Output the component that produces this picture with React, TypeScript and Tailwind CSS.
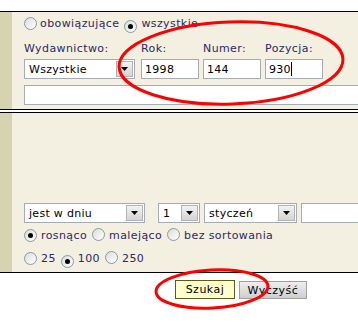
import React from "react";

const Radio = ({ checked }: { checked?: boolean }) => (
  <span className="relative inline-flex items-center justify-center w-[13px] h-[13px] rounded-full border border-[#8a97a8] bg-[linear-gradient(135deg,#dcdcd6,#ffffff)] shrink-0">
    {checked && <span className="w-[5px] h-[5px] rounded-full bg-black" />}
  </span>
);

const Select = ({ text, w }: { text: string; w: string }) => (
  <div className={`${w} shrink-0 h-[20px] border border-[#a5acb5] bg-white flex items-center justify-between pl-[4px] pr-[1px] text-black text-[11px] leading-none tracking-[0.3px]`}>
    <span>{text}</span>
    <span className="w-[17px] h-[16px] border border-[#b4b4b4] bg-[linear-gradient(#f2f2f2,#d4d4d4)] flex items-center justify-center">
      <svg width="7" height="4" viewBox="0 0 7 4"><polygon points="0,0 7,0 3.5,4" fill="#000" /></svg>
    </span>
  </div>
);

const Input = ({ text, w, caret }: { text?: string; w: string; caret?: boolean }) => (
  <div className={`${w} shrink-0 h-[20px] border border-[#a5acb5] bg-white flex items-center pl-[3px] text-black text-[11px] leading-none tracking-[0.3px]`}>
    <span>{text}</span>
    {caret && <span className="w-[1px] h-[14px] bg-black" />}
  </div>
);

export default function App() {
  const label = "text-[#2c2a62] text-[11px] leading-none tracking-[0.4px] whitespace-nowrap";
  return (
    <div className="relative w-[358px] h-[322px] bg-white overflow-hidden font-['DejaVu_Sans',sans-serif]">
      <div className="h-[11px]" />
      <div className="h-[1px] bg-black" />
      {/* upper panel */}
      <div className="flex h-[97px]">
        <div className="w-[12px] shrink-0 bg-[#d6d3b0]" />
        <div className="flex-1 min-w-0 overflow-hidden bg-[#f3efe1] pl-[12px] pt-[4px] flex flex-col">
          <div className="flex items-center h-[13px] mt-[1px]">
            <Radio />
            <span className={`${label} ml-[3px]`}>obowiązujące</span>
            <span className="ml-[5px]"><Radio checked /></span>
            <span className={`${label} ml-[4px]`}>wszystkie</span>
          </div>
          <div className="flex mt-[13px] h-[12px]">
            <span className={`${label} w-[117px] shrink-0`}>Wydawnictwo:</span>
            <span className={`${label} w-[62px] shrink-0`}>Rok:</span>
            <span className={`${label} w-[62px] shrink-0`}>Numer:</span>
            <span className={label}>Pozycja:</span>
          </div>
          <div className="flex mt-[4px]">
            <Select text="Wszystkie" w="w-[111px]" />
            <div className="ml-[6px]"><Input text="1998" w="w-[58px]" /></div>
            <div className="ml-[4px]"><Input text="144" w="w-[58px]" /></div>
            <div className="ml-[4px]"><Input text="930" w="w-[58px]" caret /></div>
          </div>
          <div className="mt-[6px] h-[20px] border border-[#a5acb5] bg-white w-[340px] shrink-0" />
        </div>
      </div>
      <div className="h-[1px] bg-black" />
      <div className="h-[2px] bg-white" />
      <div className="h-[1px] bg-black" />
      {/* lower panel */}
      <div className="flex h-[159px]">
        <div className="w-[12px] shrink-0 bg-[#d6d3b0]" />
        <div className="flex-1 min-w-0 overflow-hidden bg-[#f3efe1] pl-[12px] pt-[90px] flex flex-col">
          <div className="flex">
            <Select text="jest w dniu" w="w-[121px]" />
            <div className="ml-[13px]"><Select text="1" w="w-[42px]" /></div>
            <div className="ml-[4px]"><Select text="styczeń" w="w-[93px]" /></div>
            <div className="ml-[4px]"><Input w="w-[80px]" /></div>
          </div>
          <div className="flex items-center h-[13px] mt-[6px]">
            <Radio checked />
            <span className={`${label} ml-[4px]`}>rosnąco</span>
            <span className="ml-[5px]"><Radio /></span>
            <span className={`${label} ml-[4px]`}>malejąco</span>
            <span className="ml-[5px]"><Radio /></span>
            <span className={`${label} ml-[4px]`}>bez sortowania</span>
          </div>
          <div className="flex items-center h-[13px] mt-[10px]">
            <Radio />
            <span className={`${label} ml-[4px]`}>25</span>
            <span className="ml-[5px]"><Radio checked /></span>
            <span className={`${label} ml-[4px]`}>100</span>
            <span className="ml-[5px]"><Radio /></span>
            <span className={`${label} ml-[4px]`}>250</span>
          </div>
        </div>
      </div>
      <div className="h-[1px] bg-black" />
      <div className="flex pl-[175px] pt-[7px] items-start">
        <button className="w-[60px] h-[19px] border border-[#5c5c1c] bg-[#ffffcc] text-black text-[11px] leading-none tracking-[0.5px]">Szukaj</button>
        <button className="ml-[4px] mt-[1px] w-[68px] h-[18px] border border-[#a0a0a0] bg-[linear-gradient(#eeeeee,#cfcfcf)] text-black text-[11px] leading-none tracking-[0.5px]">Wyczyść</button>
      </div>
      <svg className="absolute left-0 top-0 pointer-events-none" width="358" height="322">
        <ellipse cx="231" cy="63" rx="112" ry="41" fill="none" stroke="#ff0000" strokeWidth="3" transform="rotate(-2 231 63)" />
        <ellipse cx="212" cy="289" rx="56" ry="19" fill="none" stroke="#ff0000" strokeWidth="3" transform="rotate(-3 212 289)" />
      </svg>
    </div>
  );
}
